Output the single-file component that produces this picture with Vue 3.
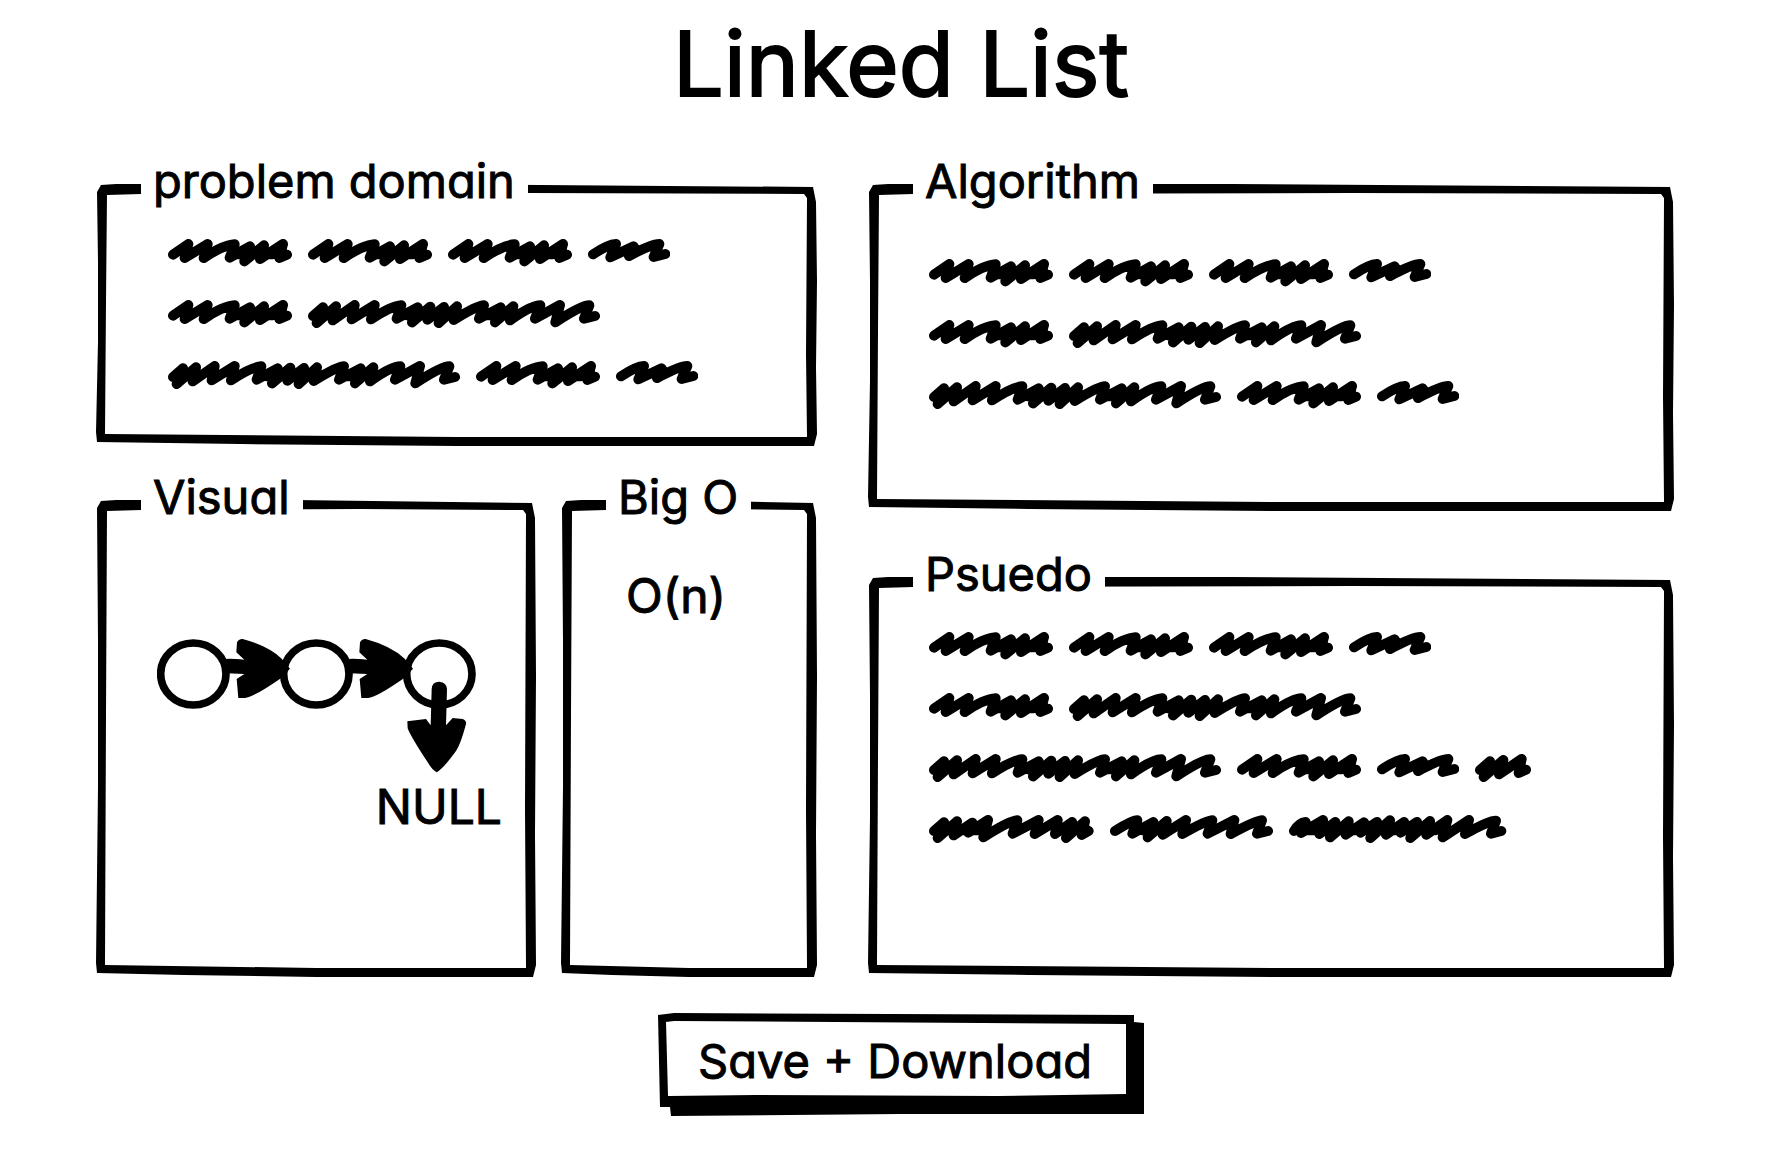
<script setup>
// Scribbled placeholder words, drawn at three units to the pixel
const words = {
  short: { w: 82, d: 'M15 46 Q60 16 84 15 L67 55 L137 22 L123 51 Q190 15 214 15 L197 54 L232 45' },
  tiny: { w: 56, d: 'M15 48 L45 22 L26 69 L85 18 L72 61 L140 15 L131 57 L153 47 M35 46 L90 46' },
  medium: { w: 124, d: 'M15 47 L61 15 L50 57 L119 15 L107 57 Q165 18 200 16 L185 56 L246 22 L229 67 L288 19 L276 60 L345 15 L334 57 L357 47 M210 46 L315 46' },
  long: { w: 292, d: 'M15 48 L45 22 L26 69 L84 19 L74 61 L140 15 L131 58 L200 15 L189 58 Q250 18 280 16 L266 56 L329 22 L312 67 L367 20 L358 59 L408 21 L392 69 L447 19 L437 60 Q510 15 528 16 L513 56 L578 22 L561 67 L616 19 L606 61 Q670 16 697 16 L681 56 L756 15 L742 67 Q820 16 844 16 L828 56 L861 48 M30 46 L75 46 M295 46 L445 46 M540 46 L605 46' },
  thick: { w: 165, d: 'M15 48 L45 22 L26 69 L84 19 L74 61 L130 23 L118 53 L177 15 L163 67 Q240 18 265 16 L251 56 L329 15 L317 57 L386 15 L378 57 L429 21 L411 69 L468 19 L458 60 L479 48 M30 46 L155 46 M385 46 L475 46' },
  wavy: { w: 163, d: 'M15 48 Q65 17 82 16 L67 56 L130 21 L113 67 L170 18 L158 59 L228 15 L217 57 Q290 16 307 16 L293 56 L373 15 L362 57 Q440 16 456 16 L441 56 L474 48 M95 46 L150 46' },
  dense: { w: 218, d: 'M15 48 Q30 23 50 21 L36 54 L102 15 L91 57 L139 21 L123 67 L179 19 L170 59 L225 22 L215 53 L264 21 L244 69 L303 16 L291 59 L345 21 L335 53 L384 21 L364 69 L423 18 L412 59 L475 15 L461 67 L540 15 L528 57 Q600 16 621 17 L606 56 L637 48 M30 46 L440 46' },
}

const opening = [
  ['medium', 'medium', 'medium', 'short'],
  ['medium', 'long'],
]
const domainLines = [...opening, ['long', 'medium', 'short']]
const algorithmLines = domainLines
const pseudoLines = [
  ...opening,
  ['long', 'medium', 'short', 'tiny'],
  ['thick', 'wavy', 'dense'],
]
</script>

<template>
  <div class="page">
    <header class="top">
      <h1>Linked List</h1>
    </header>

    <main class="board">
      <div class="column left">
        <section class="panel domain">
          <h2>problem domain</h2>
          <div class="lines">
            <div v-for="(line, i) in domainLines" :key="i" class="line">
              <svg v-for="(name, j) in line" :key="j" class="word" :width="words[name].w" height="28" :viewBox="`0 0 ${words[name].w * 3} 84`" aria-hidden="true">
                <path :d="words[name].d" />
              </svg>
            </div>
          </div>
        </section>

        <div class="pair">
          <section class="panel visual">
            <h2>Visual</h2>
            <figure class="diagram">
              <svg width="320" height="134" viewBox="51 87 960 402" aria-hidden="true">
                <g class="nodes">
                  <ellipse cx="160" cy="192" rx="98" ry="93" />
                  <ellipse cx="529" cy="192" rx="98" ry="93" />
                  <ellipse cx="898" cy="192" rx="98" ry="93" />
                </g>
                <path d="M252 148 Q262 144 313 149 L289 127 L291 97 Q296 86 308 87 Q385 108 425 146 L450 176 L425 203 Q340 262 315 264 L295 264 L290 207 L313 192 L260 190 Z" />
                <path d="M621 148 Q631 144 682 149 L658 127 L660 97 Q665 86 677 87 Q754 108 794 146 L819 176 L794 203 Q709 262 684 264 L664 264 L659 207 L682 192 L629 190 Z" />
                <path d="M875 237 Q876 215 898 215 Q920 217 921 237 L918 346 L938 324 L968 327 Q980 332 978 342 Q960 410 943 430 Q910 475 890 487 Q875 478 865 460 Q812 380 803 355 L802 334 L858 327 L872 346 Z" />
              </svg>
              <figcaption>NULL</figcaption>
            </figure>
          </section>

          <section class="panel big-o">
            <h2>Big O</h2>
            <p class="cost">O(n)</p>
          </section>
        </div>
      </div>

      <div class="column right">
        <section class="panel algorithm">
          <h2>Algorithm</h2>
          <div class="lines">
            <div v-for="(line, i) in algorithmLines" :key="i" class="line">
              <svg v-for="(name, j) in line" :key="j" class="word" :width="words[name].w" height="28" :viewBox="`0 0 ${words[name].w * 3} 84`" aria-hidden="true">
                <path :d="words[name].d" />
              </svg>
            </div>
          </div>
        </section>

        <section class="panel pseudo">
          <h2>Psuedo</h2>
          <div class="lines">
            <div v-for="(line, i) in pseudoLines" :key="i" class="line">
              <svg v-for="(name, j) in line" :key="j" class="word" :width="words[name].w" height="28" :viewBox="`0 0 ${words[name].w * 3} 84`" aria-hidden="true">
                <path :d="words[name].d" />
              </svg>
            </div>
          </div>
        </section>
      </div>
    </main>

    <footer class="actions">
      <button type="button" class="save">Save + Download</button>
    </footer>
  </div>
</template>

<style>
body {
  margin: 0;
  background: #fff;
}
</style>

<style scoped>
.page {
  box-sizing: border-box;
  padding: 8px 96px 32px;
  color: #000;
  font-family: Inter, "Noto Sans", sans-serif;
  font-feature-settings: "cv11";
  font-size: 48px;
  line-height: 56px;
  -webkit-text-stroke: 1px #000;
}

.top,
.actions {
  display: flex;
  justify-content: center;
  padding-left: 32px;
}

h1 {
  margin: 0;
  font-size: 90px;
  font-weight: 400;
  line-height: 112px;
  -webkit-text-stroke: 2px #000;
}

.board {
  display: grid;
  grid-template-columns: 721fr 806fr;
  gap: 51px;
  margin-top: 64px;
}

.column {
  display: flex;
  flex-direction: column;
  min-width: 0;
}

.left {
  gap: 54px;
}

.right {
  gap: 66px;
}

.pair {
  display: grid;
  flex: 1;
  grid-template-columns: 440fr 256fr;
  gap: 25px;
}

.panel {
  position: relative;
  box-sizing: border-box;
  isolation: isolate;
}

/* Hand-drawn frame: an uneven outer edge with an uneven hole */
.panel::before {
  content: "";
  position: absolute;
  inset: 0;
  z-index: -1;
  background: #000;
  clip-path: polygon(
    evenodd,
    1px 8px, 5px 1px, 20px 0, 45% 0, calc(100% - 4px) 3px,
    calc(100% - 1px) 18px, 100% 37%, calc(100% - 1px) 70%,
    100% calc(100% - 12px), calc(100% - 3px) 100%, 50% 100%,
    20% calc(100% - 2px), 1px calc(100% - 4px), 0 calc(100% - 14px),
    2px 60%, 2px 30%, 1px 8px,
    11px 11px, 10px 45%, 9px calc(100% - 12px), 50% calc(100% - 9px),
    calc(100% - 10px) calc(100% - 9px), calc(100% - 11px) 65%,
    calc(100% - 10px) 14px, calc(100% - 13px) 10px, 60% 9px,
    45px 10px, 11px 11px, 1px 8px
  );
}

.domain {
  min-height: 262px;
}

.visual,
.big-o {
  min-height: 477px;
}

.algorithm {
  min-height: 327px;
}

.pseudo {
  flex: 1;
}

h2 {
  width: fit-content;
  margin: -31px 0 0 45px;
  padding: 0 13px 0 12px;
  background: #fff;
  font-size: 47px;
  font-weight: 400;
  line-height: 56px;
  white-space: nowrap;
}

.lines {
  display: flex;
  flex-direction: column;
  gap: 33px;
  padding: 30px 0 40px 61px;
}

.domain .lines {
  padding-left: 72px;
}

.algorithm .lines {
  padding-top: 50px;
}

.line {
  display: flex;
  gap: 16px;
}

.word {
  flex: none;
  fill: none;
  stroke: #000;
  stroke-width: 30;
  stroke-linecap: round;
  stroke-linejoin: round;
}

.diagram {
  width: 345px;
  margin: 114px 0 0 61px;
}

.diagram svg {
  display: block;
}

.nodes {
  fill: #fff;
  stroke: #000;
  stroke-width: 23;
}

figcaption {
  margin-top: 6px;
  text-align: right;
}

.cost {
  margin: 43px 0 0 65px;
}

.actions {
  margin-top: 36px;
}

.save {
  position: relative;
  isolation: isolate;
  padding: 20px 52px 27px 40px;
  border: 0;
  background: none;
  color: inherit;
  font: inherit;
  font-size: 47px;
  font-feature-settings: inherit;
  -webkit-text-stroke: 1px #000;
  cursor: pointer;
}

.save::before,
.save::after {
  content: "";
  position: absolute;
  inset: 0;
  z-index: -1;
}

.save::before {
  background: #000;
  clip-path: polygon(
    0 2px, 16px 0, calc(100% - 10px) 2px, calc(100% - 10px) 9px,
    100% 10px, 100% calc(100% - 2px), 50% calc(100% - 2px), 13px 100%,
    12px calc(100% - 9px), 2px calc(100% - 9px)
  );
}

.save::after {
  background: #fff;
  clip-path: polygon(
    8px 9px, 16px 8px, calc(100% - 18px) 11px,
    calc(100% - 18px) calc(100% - 22px), 70% calc(100% - 20px),
    20% calc(100% - 21px), 10px calc(100% - 20px)
  );
}
</style>
